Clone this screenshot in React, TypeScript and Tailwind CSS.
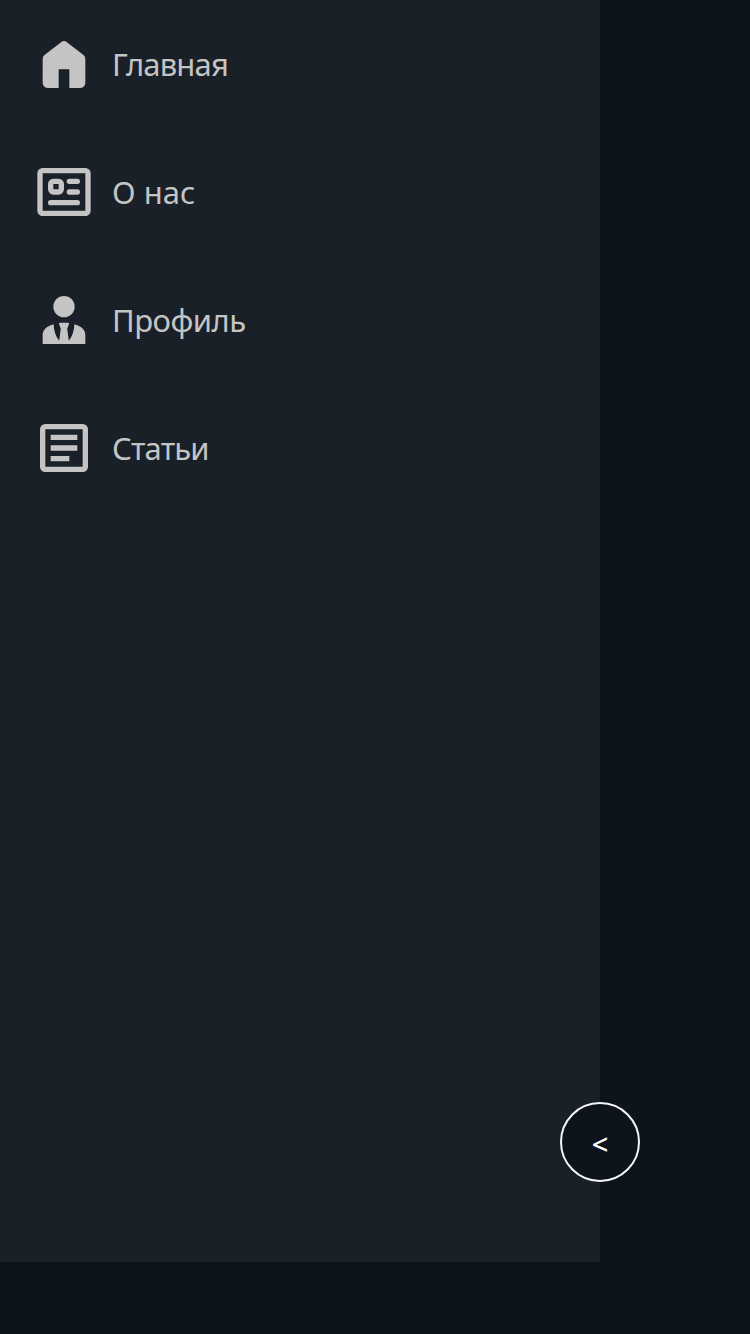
import type { ReactNode } from 'react';

const items: { label: string; tracking: string; icon: ReactNode }[] = [
  {
    label: 'Главная',
    tracking: 'tracking-[-0.85px]',
    icon: <path d="M10.9 3.8a1.8 1.8 0 0 1 2.2 0l6.1 4.7a2 2 0 0 1 .8 1.6V19a2 2 0 0 1-2 2h-4v-7h-4v7H6a2 2 0 0 1-2-2v-8.9a2 2 0 0 1 .8-1.6z" />,
  },
  {
    label: 'О нас',
    tracking: 'tracking-normal',
    icon: (
      <path
        fillRule="evenodd"
        d="M4 3h16a2 2 0 0 1 2 2v14a2 2 0 0 1-2 2H4a2 2 0 0 1-2-2V5a2 2 0 0 1 2-2zm0 2v14h16V5zm4 2h2a2 2 0 0 1 2 2v2a2 2 0 0 1-2 2H8a2 2 0 0 1-2-2V9a2 2 0 0 1 2-2zm0 2v2h2V9zm6-2h3a1 1 0 1 1 0 2h-3a1 1 0 1 1 0-2zm0 4h3a1 1 0 1 1 0 2h-3a1 1 0 1 1 0-2zm-7 4h10a1 1 0 1 1 0 2H7a1 1 0 1 1 0-2z"
      />
    ),
  },
  {
    label: 'Профиль',
    tracking: 'tracking-[-0.5px]',
    icon: (
      <>
        <circle cx="12" cy="7" r="4" />
        <path d="M8.1 13.55c.1 2.4.75 4.45 2.1 6.2l.6-4.55-.75-1.8.35-.4h3.2l.35.4-.75 1.8.6 4.55c1.35-1.75 2-3.8 2.1-6.2C18.4 14.2 20 15.5 20 17.6V21H4v-3.4c0-2.1 1.6-3.4 4.1-4.05z" />
      </>
    ),
  },
  {
    label: 'Статьи',
    tracking: 'tracking-[-0.85px]',
    icon: (
      <path
        fillRule="evenodd"
        d="M5 3h14a2 2 0 0 1 2 2v14a2 2 0 0 1-2 2H5a2 2 0 0 1-2-2V5a2 2 0 0 1 2-2zm0 2v14h14V5zm2 2h10v2H7zm0 4h10v2H7zm0 4h7v2H7z"
      />
    ),
  },
];

export default function App() {
  return (
    <div className="h-[1334px] w-[750px] overflow-hidden bg-[#0d141b] font-['Noto_Sans','Open_Sans',sans-serif]">
      <aside className="relative h-[1262px] w-[600px] bg-[#1a2027]">
        <nav className="flex flex-col text-[#c4c4c4]">
          {items.map(({ label, tracking, icon }) => (
            <a key={label} href="#" className="flex h-32 items-center gap-4 pl-8">
              <svg viewBox="0 0 24 24" className="size-16 shrink-0" fill="currentColor">
                {icon}
              </svg>
              <span className={`text-[31px] leading-[43px] ${tracking}`}>{label}</span>
            </a>
          ))}
        </nav>
        <button className="absolute -right-10 bottom-20 flex size-20 items-center justify-center rounded-full border-2 border-[#f5f5fa] bg-[#0d141b] pt-0.5 text-[29px] leading-none font-medium text-white">
          &lt;
        </button>
      </aside>
    </div>
  );
}
